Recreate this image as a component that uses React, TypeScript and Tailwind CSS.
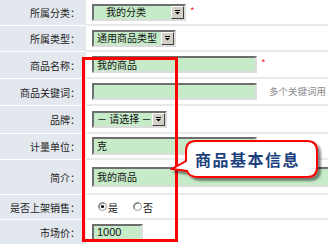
import React from "react";

const cjk = { fontFamily: '"Noto Sans CJK SC", "Noto Sans", sans-serif' };

function Arrow() {
  return (
    <svg width="7" height="5" viewBox="0 0 7 5">
      <rect x="1" y="0" width="5" height="1" fill="#000" />
      <path d="M1 2 H6 L3.5 4.5 Z" fill="#000" />
    </svg>
  );
}

function Select({ w, text, pad }: { w: string; text: string; pad: string }) {
  return (
    <div
      className={`flex h-[17px] ${w} border-2 border-t-[#6e6e6e] border-l-[#6e6e6e] border-r-[#dcdcdc] border-b-[#dcdcdc] bg-[#c6ebc9]`}
    >
      <span className={`flex flex-1 items-center ${pad} text-[10px] leading-none text-[#111] whitespace-pre`}>{text}</span>
      <span className="flex h-full w-[13px] items-center justify-center border border-t-white border-l-white border-r-[#404040] border-b-[#404040] bg-[#d4d0c8]">
        <Arrow />
      </span>
    </div>
  );
}

function Field({ w, h, text, num }: { w: string; h: string; text?: string; num?: boolean }) {
  return (
    <div
      className={`flex ${h} ${w} items-center border-2 border-t-[#6e6e6e] border-l-[#6e6e6e] border-r-[#dcdcdc] border-b-[#dcdcdc] bg-[#c6ebc9] pl-[3px] leading-none text-[#111] ${num ? "text-[11px]" : "text-[10px]"}`}
      style={num ? { fontFamily: '"Liberation Sans", Arial, sans-serif' } : undefined}
    >
      {text}
    </div>
  );
}

function Radio({ on }: { on?: boolean }) {
  return (
    <svg width="9" height="9" viewBox="0 0 9 9">
      <circle cx="4.5" cy="4.5" r="4" fill="#fff" stroke="#9a9a9a" strokeWidth="1" />
      <path d="M1.3 6.5 A4 4 0 0 1 6.5 1.3" fill="none" stroke="#606060" strokeWidth="1" />
      {on && <circle cx="4.5" cy="4.5" r="1.6" fill="#000" />}
    </svg>
  );
}

function Row({ label, h, children }: { label: string; h: string; children: React.ReactNode }) {
  return (
    <div className={`flex ${h}`}>
      <div className="flex w-[86px] shrink-0 items-center justify-end border-b border-white bg-[#e2e8ee] pr-[6px] text-[10px] text-[#222]">
        {label}
      </div>
      <div className="flex flex-1 items-center gap-[4px] border-b-2 border-[#e9e9e9] pl-[6px]">{children}</div>
    </div>
  );
}

const Star = () => <span className="text-[10px] leading-none text-[#ff3030] self-start mt-[6px]">*</span>;

export default function App() {
  return (
    <div className="relative h-[244px] w-[328px] overflow-hidden bg-white" style={cjk}>
      <Row label="所属分类：" h="h-[26px]">
        <Select w="w-[94px]" text="我的分类" pad="pl-[12px]" />
        <Star />
      </Row>
      <Row label="所属类型：" h="h-[26px]">
        <Select w="w-[84px]" text="通用商品类型" pad="pl-[3px]" />
      </Row>
      <Row label="商品名称：" h="h-[27px]">
        <Field w="w-[165px]" h="h-[17px]" text="我的商品" />
        <Star />
      </Row>
      <Row label="商品关键词：" h="h-[27px]">
        <Field w="w-[165px]" h="h-[17px]" />
        <span className="ml-[8px] whitespace-nowrap text-[9.5px] text-[#8a8a8a]">多个关键词用</span>
      </Row>
      <Row label="品牌：" h="h-[28px]">
        <Select w="w-[75px]" text="－ 请选择 －" pad="pl-[3px]" />
      </Row>
      <Row label="计量单位：" h="h-[26px]">
        <Field w="w-[165px]" h="h-[18px]" text="克" />
      </Row>
      <Row label="简介：" h="h-[35px]">
        <Field w="w-[260px] shrink-0" h="h-[20px]" text="我的商品" />
      </Row>
      <Row label="是否上架销售：" h="h-[25px]">
        <div className="flex items-center pl-[6px] text-[10px] text-[#111]">
          <Radio on />
          <span className="ml-[1px] mt-[2px]">是</span>
          <span className="ml-[15px] flex items-center">
            <Radio />
            <span className="ml-[1px] mt-[2px]">否</span>
          </span>
        </div>
      </Row>
      <Row label="市场价：" h="h-[26px]">
        <Field w="w-[51px]" h="h-[17px]" text="1000" num />
      </Row>

      {/* red frame */}
      <div className="pointer-events-none absolute left-[82px] top-[57px] h-[185px] w-[96px] border-[3px] border-[#ff0000]" />

      {/* callout */}
      <svg className="absolute left-[170px] top-[136px]" width="158" height="50" viewBox="0 0 158 50">
        <defs>
          <filter id="sh" x="-10%" y="-10%" width="130%" height="140%">
            <feDropShadow dx="3" dy="3" stdDeviation="1.2" floodColor="#000" floodOpacity="0.45" />
          </filter>
        </defs>
        <path
          d="M26 5 H137 Q147 5 147 15 V31 Q147 41 137 41 H28 Q19 41 17 35 L2 33 L16 25 V15 Q16 5 26 5 Z"
          fill="#fff"
          stroke="#ff0000"
          strokeWidth="2"
          filter="url(#sh)"
        />
      </svg>
      <div className="absolute left-[186px] top-[141px] flex h-[36px] w-[131px] items-center justify-center pr-[8px] text-[16px] font-bold tracking-[1.5px] text-[#1c3f7e]">
        商品基本信息
      </div>
    </div>
  );
}
